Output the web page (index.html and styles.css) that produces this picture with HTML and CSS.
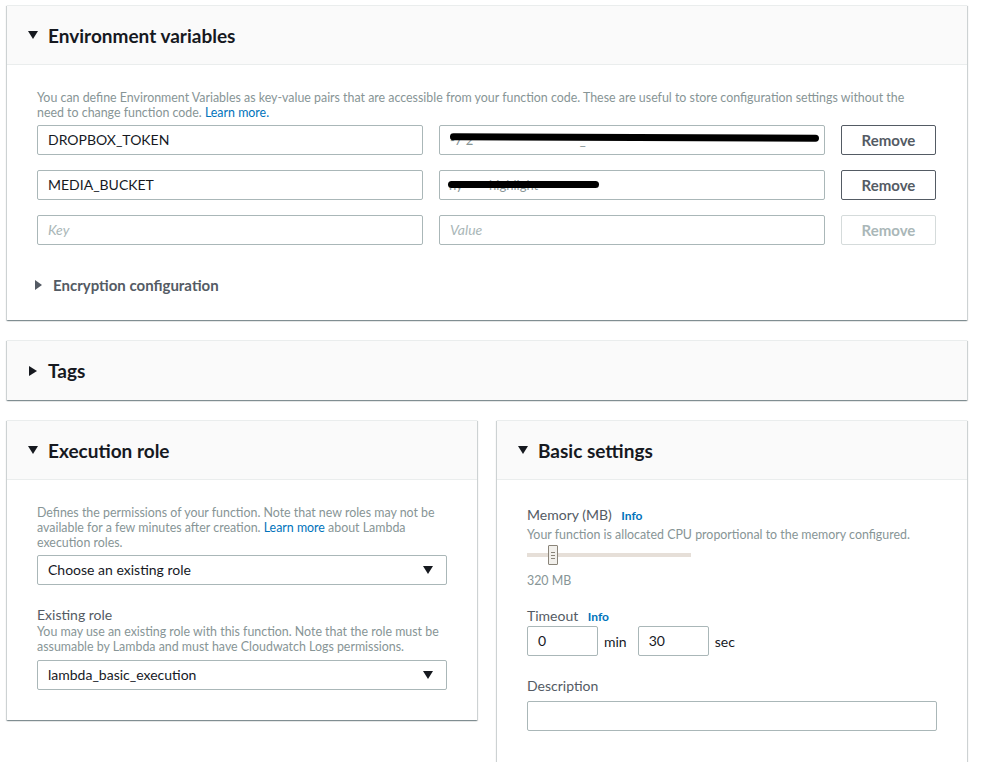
FILE: index.html
```html
<!DOCTYPE html>
<html>
<head>
<meta charset="utf-8">
<link rel="stylesheet" href="styles.css">
</head>
<body>
<div class="page">
  <section class="panel">
    <header class="panel-head"><span class="tri down"></span><h2>Environment variables</h2></header>
    <div class="panel-body env-body">
      <p class="desc env-desc">You can define Environment Variables as key-value pairs that are accessible from your function code. These are useful to store configuration settings without the need to change function code. <a class="link">Learn more.</a></p>
      <div class="env-grid">
        <div class="input">DROPBOX_TOKEN</div>
        <div class="input redact-wrap"><span class="ghost">-7 2 &nbsp; &nbsp; &nbsp; &nbsp; &nbsp; &nbsp; &nbsp; &nbsp; &nbsp; &nbsp; &nbsp; &nbsp; &nbsp; &nbsp; &nbsp; &nbsp;_</span><span class="redact r1"></span></div>
        <button class="btn">Remove</button>
        <div class="input">MEDIA_BUCKET</div>
        <div class="input redact-wrap"><span class="ghost g2">ny &nbsp; &nbsp; &nbsp; &nbsp;highlight</span><span class="redact r2"></span></div>
        <button class="btn">Remove</button>
        <div class="input placeholder">Key</div>
        <div class="input placeholder">Value</div>
        <button class="btn disabled">Remove</button>
      </div>
      <div class="subsection"><span class="tri right small"></span><span>Encryption configuration</span></div>
    </div>
  </section>

  <section class="panel tags">
    <header class="panel-head nob"><span class="tri right"></span><h2>Tags</h2></header>
  </section>

  <div class="columns">
    <section class="panel col exec">
      <header class="panel-head"><span class="tri down"></span><h2>Execution role</h2></header>
      <div class="panel-body col-body">
        <p class="desc">Defines the permissions of your function. Note that new roles may not be available for a few minutes after creation. <a class="link">Learn more</a> about Lambda execution roles.</p>
        <div class="select">Choose an existing role<span class="caret"></span></div>
        <div class="field">
          <div class="label">Existing role</div>
          <p class="desc">You may use an existing role with this function. Note that the role must be assumable by Lambda and must have Cloudwatch Logs permissions.</p>
          <div class="select second">lambda_basic_execution<span class="caret"></span></div>
        </div>
      </div>
    </section>

    <section class="panel col basic">
      <header class="panel-head"><span class="tri down"></span><h2>Basic settings</h2></header>
      <div class="panel-body basic-body">
        <div class="label">Memory (MB) <a class="info">Info</a></div>
        <p class="desc mem-desc">Your function is allocated CPU proportional to the memory configured.</p>
        <div class="slider"><div class="track"></div><div class="handle"><i></i><i></i><i></i></div></div>
        <div class="small-val">320 MB</div>
        <div class="label timeout-label">Timeout <a class="info">Info</a></div>
        <div class="timeout">
          <div class="input short">0</div><span class="unit">min</span>
          <div class="input short">30</div><span class="unit">sec</span>
        </div>
        <div class="label desc-label">Description</div>
        <div class="input wide"></div>
      </div>
    </section>
  </div>
</div>
</body>
</html>
```

FILE: styles.css
```css
* { box-sizing: border-box; }
html, body { margin: 0; padding: 0; background: #fff; }
body { font-family: Lato, "Liberation Sans", sans-serif; color: #16191f; }
.page { width: 960px; margin-left: 7px; padding-top: 5px; }
.panel {
  background: #fff;
  border-top: 1px solid #eaeded;
  box-shadow: 0 1px 1px 0 rgba(0,28,36,.3), 1px 1px 1px 0 rgba(0,28,36,.15), -1px 1px 1px 0 rgba(0,28,36,.15);
}
.panel.tags, .columns { margin-top: 20px; }
.panel-head {
  height: 59px;
  background: #fafafa;
  border-bottom: 1px solid #eaeded;
  display: flex;
  align-items: center;
  padding-left: 21px;
}
.panel-head.nob { border-bottom: none; }
.panel-head h2 { margin: 0; font-size: 19px; font-weight: 700; color: #16191f; }
.tri { display: inline-block; width: 0; height: 0; margin-right: 10px; }
.tri.down { border-left: 5px solid transparent; border-right: 5px solid transparent; border-top: 8px solid #16191f; }
.tri.right { border-top: 5px solid transparent; border-bottom: 5px solid transparent; border-left: 8px solid #16191f; margin-left: 1px; margin-right: 11px; }
.tri.right.small { border-left-color: #545b64; border-left-width: 7px; margin-left: 0; margin-right: 11px; }
.panel-body { padding: 25px 30px 25px 30px; }
.desc { margin: 0; font-size: 12.4px; line-height: 15px; color: #879596; }
.env-desc { max-width: 885px; }
.link { color: #0073bb; text-decoration: none; display: inline-block; line-height: 15px; }
.env-grid {
  margin-top: 5px;
  display: grid;
  grid-template-columns: 386px 386px 95px;
  column-gap: 16px;
  row-gap: 15px;
}
.input {
  height: 30px;
  border: 1px solid #aab7b8;
  border-radius: 2px;
  font-size: 14px;
  line-height: 28px;
  padding-left: 10px;
  color: #16191f;
  background: #fff;
}
.input.placeholder { color: #aab7b8; font-style: italic; }
.redact-wrap { position: relative; overflow: hidden; }
.ghost { color: #879596; font-size: 13px; }
.g2 { margin-left: -1px; }
.redact { position: absolute; background: #000; border-radius: 4px; height: 7px; }
.r1 { left: 10px; top: 8px; width: 369px; transform: rotate(0.2deg); }
.r2 { left: 8px; top: 10px; width: 151px; }
.btn {
  height: 30px;
  border: 1px solid #545b64;
  border-radius: 2px;
  background: #fff;
  color: #545b64;
  font-family: inherit;
  font-size: 15px;
  font-weight: 700;
  padding: 0;
}
.btn.disabled { border-color: #d5dbdb; color: #aab7b8; }
.subsection {
  margin-top: 30px;
  display: flex;
  align-items: center;
  font-size: 15px;
  font-weight: 700;
  color: #545b64;
  line-height: 20px;
  margin-left: -2px;
}
.columns { display: grid; grid-template-columns: 470px 470px; column-gap: 20px; align-items: start; }
.col-body { padding: 25px 30px 30px 30px; }
.select {
  margin-top: 5px;
  height: 30px;
  border: 1px solid #aab7b8;
  border-radius: 2px;
  font-size: 14px;
  line-height: 28px;
  padding-left: 10px;
  position: relative;
  color: #16191f;
}
.select.second { margin-top: 6px; }
.caret {
  position: absolute; right: 13px; top: 10px;
  width: 0; height: 0;
  border-left: 5px solid transparent; border-right: 5px solid transparent; border-top: 8px solid #16191f;
}
.field { margin-top: 21px; }
.label { font-size: 14px; line-height: 18px; color: #545b64; }
.info { color: #0073bb; font-size: 12px; font-weight: 700; margin-left: 6px; }
.basic-body { padding: 26px 30px 31px 30px; }
.mem-desc { margin-top: 2px; }
.slider { position: relative; height: 24px; width: 164px; margin-top: 3px; }
.track { position: absolute; left: 0; right: 0; top: 8px; height: 4px; background: #e6dfd8; }
.handle {
  position: absolute; left: 21px; top: 0; width: 10px; height: 20px;
  background: #f2f0ec; border: 1px solid #8a8479; border-radius: 1px;
  display: flex; flex-direction: column; align-items: center; justify-content: center; gap: 2px;
}
.handle i { display: block; width: 4px; height: 1px; background: #8a8479; }
.small-val { font-size: 12.4px; color: #879596; line-height: 15px; margin-top: 4px; }
.timeout-label { margin-top: 19px; }
.timeout { display: flex; align-items: center; margin-top: 0; }
.input.short { width: 71px; height: 30px; }
.unit { font-size: 14px; color: #16191f; margin: 0 11px 0 6px; }
.desc-label { margin-top: 21px; }
.input.wide { width: 410px; margin-top: 6px; }
```
